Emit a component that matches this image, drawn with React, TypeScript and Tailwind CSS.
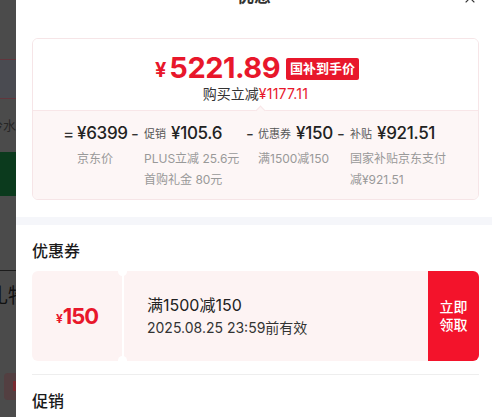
import React from 'react';
import { X } from 'lucide-react';

const FONT = { fontFamily: 'Inter, "Noto Sans CJK SC", sans-serif' };

// 左侧遮罩下露出的页面边缘
const PageEdge: React.FC = () => (
  <div className="w-4 shrink-0 flex flex-col overflow-hidden bg-[#4b4b4b]">
    <div className="h-[59px] shrink-0" />
    <div className="h-px shrink-0 bg-[#62363d]" />
    <div className="h-[38px] shrink-0 bg-[#4a4b51]" />
    <div className="h-px shrink-0 bg-[#62363d]" />
    <div className="h-[53px] shrink-0 flex items-center justify-end whitespace-nowrap text-[13px] text-[#262626]">
      冷水
    </div>
    <div className="h-[44px] shrink-0 bg-[#0b3a1d]" />
    <div className="h-[74px] shrink-0" />
    <div className="h-px shrink-0 bg-[#1c1c1c]" />
    <div className="h-[50px] shrink-0 flex items-center whitespace-nowrap -ml-[12px] text-[20px] text-[#111]">
      礼物
    </div>
    <div className="h-[52px] shrink-0" />
    <div className="h-[27px] shrink-0 ml-1 rounded-l-sm bg-[#533f41] flex justify-end">
      <div className="w-[3px] h-[10px] mt-2 bg-[#7a2a30]" />
    </div>
  </div>
);

type Part = {
  sym: string;
  symW: string;
  colW: string;
  label?: string;
  amount: string;
  sub: string[];
};

const parts: Part[] = [
  { sym: '=', symW: 'w-[14px]', colW: 'w-[66px]', amount: '¥6399', sub: ['京东价'] },
  { sym: '-', symW: 'w-[15px] pl-[2px]', colW: 'w-[117px]', label: '促销', amount: '¥105.6', sub: ['PLUS立减 25.6元', '首购礼金 80元'] },
  { sym: '-', symW: 'w-[12px]', colW: 'w-[91px]', label: '优惠券', amount: '¥150', sub: ['满1500减150'] },
  { sym: '-', symW: 'w-[13px]', colW: 'w-[118px]', label: '补贴', amount: '¥921.51', sub: ['国家补贴京东支付', '减¥921.51'] },
];

const PriceCard: React.FC = () => (
  <div className="rounded-md border border-[#f6e5e7] overflow-hidden">
    {/* 到手价 */}
    <div className="pt-[11px] pb-[6px] flex flex-col items-center bg-white">
      <div className="flex items-center h-[34px] ml-[3px]">
        <span className="text-[#e8172b] font-bold text-[20px] leading-none mt-[6px] mr-[3px]">¥</span>
        <span className="text-[#e8172b] font-bold text-[29px] leading-none tracking-[-0.5px]">5221.89</span>
        <span className="ml-[6px] mt-[3px] px-[4px] h-[22px] flex items-center rounded-[2px] bg-[#e8172b] text-white text-[13px] font-bold">
          国补到手价
        </span>
      </div>
      <div className="text-[14px] leading-5 text-[#333]">
        购买立减<span className="text-[#e8172b] tracking-[0.2px]">¥1177.11</span>
      </div>
    </div>
    {/* 价格拆分 */}
    <div className="relative border-t border-[#f8e6e8] bg-[#fdf6f6] pl-[30px] pt-[11px] pb-[9px] flex">
      <div className="absolute -top-[4px] left-[224px] w-[7px] h-[7px] rotate-45 bg-[#fdf6f6] border-l border-t border-[#f8e6e8]" />
      {parts.map((p, i) => (
        <div key={i} className={`${p.colW} shrink-0 flex`}>
          <span className={`${p.symW} shrink-0 text-[17px] leading-6 text-[#333]`}>{p.sym}</span>
          <div className="flex flex-col">
            <div className="flex items-center h-6 whitespace-nowrap">
              {p.label && <span className="text-[11px] text-[#555] mr-[5px]">{p.label}</span>}
              <span className="text-[17px] font-medium text-[#222] tracking-[-0.3px]">{p.amount}</span>
            </div>
            <div className="mt-[2px] text-[12px] leading-[21px] text-[#999] whitespace-nowrap">
              {p.sub.map((s) => (
                <div key={s}>{s}</div>
              ))}
            </div>
          </div>
        </div>
      ))}
    </div>
  </div>
);

const Coupon: React.FC = () => (
  <div className="relative flex h-[90px] rounded-md overflow-hidden">
    <div className="w-[90px] shrink-0 flex items-center justify-center bg-[#fdf3f3] text-[#e8172b]">
      <span className="text-[12px] font-bold mt-[5px]">¥</span>
      <span className="text-[22px] font-bold tracking-[-1px]">150</span>
    </div>
    <div className="w-[2px] shrink-0 bg-white" />
    <div className="flex-1 flex flex-col justify-center pl-[23px] bg-[#fdf3f3]">
      <div className="text-[16px] leading-6 text-[#222]">满1500减150</div>
      <div className="text-[14px] leading-[22px] text-[#333]">2025.08.25 23:59前有效</div>
    </div>
    <div className="w-[51px] shrink-0 flex items-center justify-center bg-[#f3132b] text-white text-[14px] leading-[18px] font-medium text-center">
      立即
      <br />
      领取
    </div>
    {/* 票根缺口 */}
    <div className="absolute -top-[4px] left-[86px] w-[9px] h-[9px] rounded-full bg-white" />
    <div className="absolute -bottom-[4px] left-[86px] w-[9px] h-[9px] rounded-full bg-white" />
  </div>
);

export default function App() {
  return (
    <div className="w-[492px] h-[417px] flex overflow-hidden bg-white" style={FONT}>
      <PageEdge />
      <div className="flex-1 flex flex-col bg-white">
        <div className="relative -mt-[25px] h-[44px] shrink-0 flex items-center justify-center">
          <span className="text-[17px] font-bold text-[#333]">优惠</span>
          <X className="absolute right-[14px] top-[15px] w-4 h-4 text-[#333]" strokeWidth={1.6} />
        </div>
        <div className="pl-4 pr-[13px] mt-[19px]">
          <PriceCard />
        </div>
        <div className="mt-[17px] h-2 shrink-0 bg-[#f5f6fa]" />
        <div className="pl-4 pr-[13px] pt-[14px]">
          <div className="text-[16px] leading-6 font-medium text-[#1a1a1a]">优惠券</div>
          <div className="mt-2">
            <Coupon />
          </div>
          <div className="mt-[13px] h-px bg-[#eeeeee]" />
          <div className="mt-[14px] text-[16px] leading-6 font-medium text-[#1a1a1a]">促销</div>
        </div>
      </div>
    </div>
  );
}
